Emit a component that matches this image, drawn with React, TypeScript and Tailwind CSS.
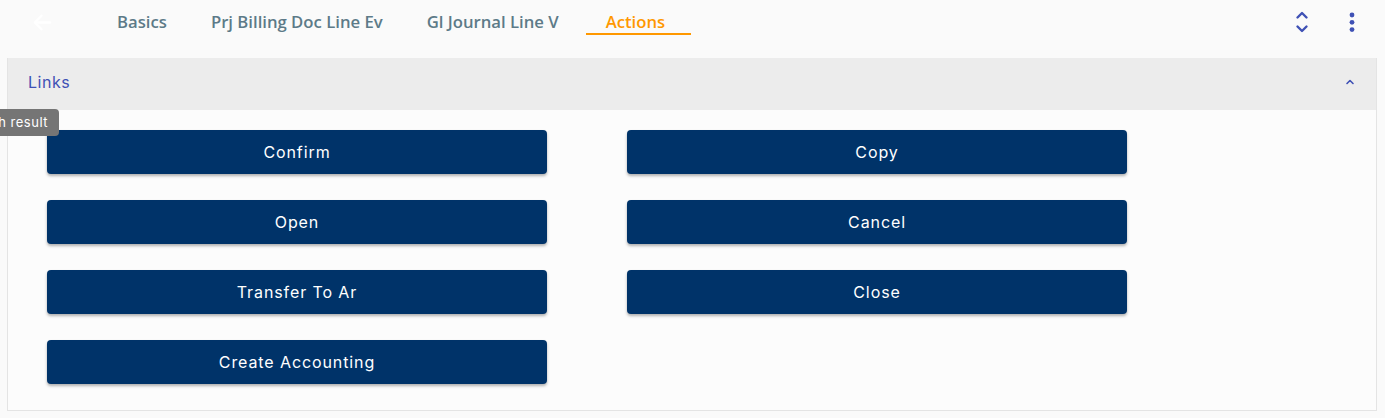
import React from "react";

const buttons: [string, string | null][] = [
  ["Confirm", "Copy"],
  ["Open", "Cancel"],
  ["Transfer To Ar", "Close"],
  ["Create Accounting", null],
];

function Tab({ label, active }: { label: string; active?: boolean }) {
  return (
    <div className="relative h-full flex items-center px-5">
      <span
        className={
          "text-[16.7px] leading-none font-semibold " +
          (active ? "text-[#ff9800]" : "text-[#5d7a88]")
        }
        style={{ fontFamily: '"Open Sans", "Noto Sans", sans-serif' }}
      >
        {label}
      </span>
      {active && <div className="absolute left-0 -right-[6px] top-[33px] h-[2px] bg-[#ff9800]" />}
    </div>
  );
}

const btn =
  "h-[44px] rounded-[4px] bg-[#003369] text-white text-[16px] tracking-[0.9px] shadow-[0_2px_3px_rgba(0,0,0,0.3)]";

export default function App() {
  return (
    <div
      className="relative w-[1385px] h-[418px] bg-[#fafafa] overflow-hidden"
      style={{ fontFamily: 'Inter, "Noto Sans", sans-serif' }}
    >
      {/* Header */}
      <div className="h-[58px] flex items-start">
        <div className="w-[97px] h-[44px] flex items-center pl-[31px]">
          <svg width="23" height="23" viewBox="0 0 24 24" fill="none" stroke="#ffffff" strokeWidth="2.4" strokeLinecap="round" strokeLinejoin="round">
            <path d="M20 12H5" />
            <path d="M11 5l-7 7 7 7" />
          </svg>
        </div>
        <div className="flex h-[44px] gap-[4px]">
          <Tab label="Basics" />
          <Tab label="Prj Billing Doc Line Ev" />
          <Tab label="Gl Journal Line V" />
          <div className="ml-[3px] h-full">
            <Tab label="Actions" active />
          </div>
        </div>
        <div className="flex-1" />
        <div className="h-[44px] flex items-center gap-[38px] pr-[29px]">
          <svg width="16" height="24" viewBox="0 0 16 24" fill="none" stroke="#3f51b5" strokeWidth="2.4" strokeLinecap="round" strokeLinejoin="round">
            <path d="M3.5 7.5L8 3l4.5 4.5" />
            <path d="M3.5 16.5L8 21l4.5-4.5" />
          </svg>
          <svg width="8" height="24" viewBox="0 0 8 24" fill="#3f51b5">
            <circle cx="4" cy="5" r="2.4" />
            <circle cx="4" cy="12.3" r="2.4" />
            <circle cx="4" cy="19.6" r="2.4" />
          </svg>
        </div>
      </div>

      {/* Panel */}
      <div className="ml-[7px] w-[1370px] border-l border-r border-b border-[#e4e4e4] bg-[#fcfcfc]">
        <div className="h-[52px] bg-[#ececec] flex items-center justify-between pl-[20px] pr-[21px] pb-[4px]">
          <span className="text-[16px] tracking-[0.5px] text-[#3f51b5]">Links</span>
          <svg width="10" height="8" viewBox="0 0 10 8" fill="none" stroke="#3f51b5" strokeWidth="1.6" strokeLinecap="round" strokeLinejoin="round">
            <path d="M2 5.5L5 2.5l3 3" />
          </svg>
        </div>
        <div className="pl-[39px] pt-[20px] pb-[26px]">
          <div className="grid grid-cols-[500px_500px] gap-x-[80px] gap-y-[26px]">
            {buttons.map(([a, b], i) => (
              <React.Fragment key={i}>
                <button className={btn}>{a}</button>
                {b ? <button className={btn}>{b}</button> : <div />}
              </React.Fragment>
            ))}
          </div>
        </div>
      </div>

      {/* Tooltip */}
      <div className="absolute left-0 top-[109px] w-[59px] h-[27px] overflow-hidden rounded-r-[4px] bg-[#757575] flex items-center justify-end pr-[11px]">
        <span className="whitespace-nowrap text-white text-[13px] tracking-[0.5px] leading-none">Search result</span>
      </div>
    </div>
  );
}
